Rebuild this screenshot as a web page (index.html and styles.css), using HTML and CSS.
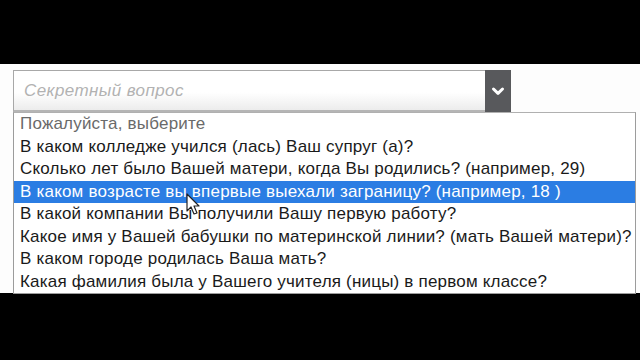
FILE: index.html
```html
<!DOCTYPE html>
<html lang="ru">
<head>
<meta charset="utf-8">
<link rel="stylesheet" href="styles.css">
</head>
<body>
<div class="bar-top"></div>
<div class="stage">
  <div class="select">
    <div class="placeholder">Секретный вопрос</div>
    <div class="arrow">
      <svg width="14" height="10" viewBox="0 0 14 10"><path d="M2.5 3 L7 7.3 L11.5 3" fill="none" stroke="#ffffff" stroke-width="3" stroke-linecap="round" stroke-linejoin="round"/></svg>
    </div>
  </div>
  <ul class="list">
    <li class="opt muted">Пожалуйста, выберите</li>
    <li class="opt">В каком колледже учился (лась) Ваш супруг (а)?</li>
    <li class="opt">Сколько лет было Вашей матери, когда Вы родились? (например, 29)</li>
    <li class="opt active">В каком возрасте вы впервые выехали заграницу? (например, 18 )</li>
    <li class="opt">В какой компании Вы получили Вашу первую работу?</li>
    <li class="opt">Какое имя у Вашей бабушки по материнской линии? (мать Вашей матери)?</li>
    <li class="opt">В каком городе родилась Ваша мать?</li>
    <li class="opt">Какая фамилия была у Вашего учителя (ницы) в первом классе?</li>
  </ul>
  <svg class="cursor" width="16" height="24" viewBox="0 0 16 24"><path d="M1 1 L1 18 L5 14 L8 21 L11 20 L8 13 L13 13 Z" fill="#ffffff" stroke="#222" stroke-width="1.2" stroke-linejoin="round"/></svg>
</div>
<div class="bar-bottom"></div>
</body>
</html>
```
FILE: styles.css
```css
html, body {
  margin: 0;
  padding: 0;
  background: #000;
  width: 640px;
  height: 360px;
  overflow: hidden;
  font-family: "Liberation Sans", Arial, sans-serif;
}
.bar-top {
  height: 64px;
  background: #000;
}
.stage {
  position: relative;
  height: 229px;
  background: #fdfdfd;
  padding: 6px 0 0 13px;
  box-sizing: border-box;
}
.select {
  width: 498px;
  height: 42px;
  box-sizing: border-box;
  border: 1px solid #a8a8a8;
  border-bottom: 2px solid #b5b5b5;
  background: linear-gradient(#ffffff 0%, #ffffff 55%, #ececec 100%);
  display: flex;
  align-items: stretch;
}
.placeholder {
  flex: 1;
  font-style: italic;
  font-size: 17px;
  letter-spacing: 0.4px;
  color: #b2b2b2;
  padding-left: 10px;
  display: flex;
  align-items: center;
  padding-top: 1px;
}
.arrow {
  width: 26px;
  margin: -1px -1px -2px 0;
  background: #58595c;
  display: flex;
  align-items: center;
  justify-content: center;
}
.list {
  list-style: none;
  margin: 0;
  padding: 0;
  width: 623px;
  box-sizing: border-box;
  border: 1px solid #9c9c9c;
  border-top-color: #b0b0b0;
  background: #fff;
}
.opt {
  height: 22.5px;
  line-height: 21.5px;
  padding-left: 6px;
  font-size: 17px;
  letter-spacing: 0.2px;
  color: #1a1a1a;
  white-space: nowrap;
}
.opt.muted {
  color: #6a6a6a;
}
.opt.active {
  background: #2b7de3;
  color: #ffffff;
}
.cursor {
  position: absolute;
  left: 186px;
  top: 129px;
}
.bar-bottom {
  height: 67px;
  background: #000;
}
```
